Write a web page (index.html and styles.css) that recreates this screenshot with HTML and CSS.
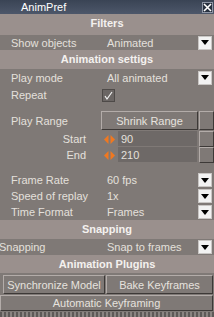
FILE: index.html
```html
<!DOCTYPE html>
<html>
<head>
<meta charset="utf-8">
<link rel="stylesheet" href="styles.css">
</head>
<body>
<div class="win">
  <div class="titlebar">
    <span class="title">AnimPref</span>
    <span class="close"><svg width="9" height="9" viewBox="0 0 9 9"><path d="M1 1 L8 8 M8 1 L1 8" stroke="#fff" stroke-width="1.6"/></svg></span>
  </div>

  <div class="hdr h-first">Filters</div>
  <div class="row r15">
    <span class="lbl">Show objects</span>
    <div class="dd"><span class="dd-text">Animated</span><span class="dd-btn"><svg width="8" height="5" viewBox="0 0 8 5"><path d="M0 0 H8 L4 5 Z" fill="#000"/></svg></span></div>
  </div>

  <div class="hdr">Animation settigs</div>
  <div class="row r17">
    <span class="lbl">Play mode</span>
    <div class="dd"><span class="dd-text">All animated</span><span class="dd-btn"><svg width="8" height="5" viewBox="0 0 8 5"><path d="M0 0 H8 L4 5 Z" fill="#000"/></svg></span></div>
  </div>
  <div class="row r17">
    <span class="lbl">Repeat</span>
    <span class="check"><svg width="11" height="11" viewBox="0 0 11 11"><path d="M2 6 L4 9 L9 2" stroke="#f2f2f2" stroke-width="1.2" fill="none"/></svg></span>
  </div>

  <div class="row r19 range">
    <span class="lbl">Play Range</span>
    <span class="btn shrink">Shrink Range</span>
    <span class="sq"></span>
  </div>
  <div class="row r16 num first-num">
    <span class="lbl lbl-r">Start</span>
    <span class="arrows"><svg width="11" height="9" viewBox="0 0 11 9"><path d="M4.5 0 V9 L0 4.5 Z M6.5 0 V9 L11 4.5 Z" fill="#f07820"/></svg></span>
    <span class="field">90</span>
    <span class="sq"></span>
  </div>
  <div class="row r16 num">
    <span class="lbl lbl-r">End</span>
    <span class="arrows"><svg width="11" height="9" viewBox="0 0 11 9"><path d="M4.5 0 V9 L0 4.5 Z M6.5 0 V9 L11 4.5 Z" fill="#f07820"/></svg></span>
    <span class="field">210</span>
    <span class="sq"></span>
  </div>

  <div class="row r16 after-gap">
    <span class="lbl">Frame Rate</span>
    <div class="dd"><span class="dd-text">60 fps</span><span class="dd-btn"><svg width="8" height="5" viewBox="0 0 8 5"><path d="M0 0 H8 L4 5 Z" fill="#000"/></svg></span></div>
  </div>
  <div class="row r16">
    <span class="lbl">Speed of replay</span>
    <div class="dd"><span class="dd-text">1x</span><span class="dd-btn"><svg width="8" height="5" viewBox="0 0 8 5"><path d="M0 0 H8 L4 5 Z" fill="#000"/></svg></span></div>
  </div>
  <div class="row r16">
    <span class="lbl">Time Format</span>
    <div class="dd"><span class="dd-text">Frames</span><span class="dd-btn"><svg width="8" height="5" viewBox="0 0 8 5"><path d="M0 0 H8 L4 5 Z" fill="#000"/></svg></span></div>
  </div>

  <div class="hdr">Snapping</div>
  <div class="row r16">
    <span class="lbl lbl-clip">Snapping</span>
    <div class="dd"><span class="dd-text">Snap to frames</span><span class="dd-btn"><svg width="8" height="5" viewBox="0 0 8 5"><path d="M0 0 H8 L4 5 Z" fill="#000"/></svg></span></div>
  </div>

  <div class="hdr h-last">Animation Plugins</div>
  <div class="btnrow">
    <span class="btn b-sync">Synchronize Model</span>
    <span class="btn b-bake">Bake Keyframes</span>
  </div>
  <span class="btn b-auto">Automatic Keyframing</span>
  <div class="pattern"></div>
</div>
</body>
</html>
```

FILE: styles.css
```css
html, body {
  margin: 0;
  padding: 0;
}
body {
  background: #7f7976;
  font-family: "Liberation Sans", Arial, sans-serif;
  font-size: 11px;
  color: #e4e0dc;
}
.win {
  width: 214px;
  height: 317px;
  overflow: hidden;
  display: flex;
  flex-direction: column;
  background: #7f7976;
}
.titlebar {
  height: 14px;
  flex: none;
  display: flex;
  align-items: center;
  justify-content: space-between;
  background: linear-gradient(#3a4455, #4d576a);
  color: #ffffff;
  padding: 0 1px 0 21px;
}
.title {
  font-size: 11px;
  line-height: 14px;
}
.close {
  width: 9px;
  height: 9px;
  display: flex;
  align-items: center;
  justify-content: center;
  background: #27303f;
  border: 1px solid #8e96a6;
}
.hdr {
  flex: none;
  height: 19px;
  line-height: 19px;
  text-align: center;
  font-weight: bold;
  color: #f4f1ef;
  background: #9a908d;
}
.h-first {
  height: 21px;
  line-height: 19px;
}
.h-last {
  height: 18px;
  line-height: 18px;
}
.row {
  flex: none;
  display: flex;
  align-items: center;
}
.r15 { height: 15px; }
.r16 { height: 16px; }
.r17 { height: 17px; }
.r19 { height: 19px; }
.lbl {
  width: 93px;
  padding-left: 11px;
  flex: none;
  white-space: nowrap;
}
.lbl-r {
  width: 86px;
  padding-left: 0;
  padding-right: 18px;
  text-align: right;
}
.lbl-clip {
  padding-left: 0;
  margin-left: -1px;
  width: 105px;
}
.dd {
  flex: 1;
  display: flex;
  align-items: center;
  padding-right: 2px;
}
.dd-text {
  flex: 1;
  padding-left: 3px;
  white-space: nowrap;
}
.dd-btn {
  width: 12px;
  height: 12px;
  display: flex;
  align-items: center;
  justify-content: center;
  background: #f2f2f2;
  border: 1px solid #c9c6c4;
}
.check {
  width: 11px;
  height: 11px;
  margin-left: -2px;
  margin-top: 1px;
  background: #6b6664;
  border: 1px solid #4e4a48;
  display: flex;
  align-items: center;
  justify-content: center;
}
.range {
  margin-top: 8px;
  align-items: stretch;
}
.range .lbl {
  width: 86px;
  display: flex;
  align-items: center;
}
.btn {
  display: flex;
  align-items: center;
  justify-content: center;
  background: #7f7976;
  color: #e6e2de;
  border-top: 1px solid #b3aca9;
  border-left: 1px solid #b3aca9;
  border-right: 1px solid #3d3937;
  border-bottom: 1px solid #3d3937;
  white-space: nowrap;
  box-sizing: border-box;
}
.shrink {
  width: 97px;
  margin-left: 4px;
}
.sq {
  width: 15px;
  height: 100%;
  box-sizing: border-box;
  margin-left: 1px;
  border-top: 1px solid #b3aca9;
  border-left: 1px solid #b3aca9;
  border-right: 1px solid #3d3937;
  border-bottom: 1px solid #3d3937;
}
.num {
  align-items: stretch;
}
.first-num {
  margin-top: 1px;
}
.num .lbl {
  display: flex;
  align-items: center;
  justify-content: flex-end;
}
.arrows {
  width: 14px;
  display: flex;
  align-items: center;
  flex: none;
}
.field {
  width: 76px;
  padding-left: 3px;
  margin-right: 1px;
  background: #6e6967;
  display: flex;
  align-items: center;
  border-bottom: 1px solid #7f7976;
}
.after-gap {
  margin-top: 9px;
}
.btnrow {
  flex: none;
  display: flex;
  margin-top: 2px;
  padding-left: 3px;
  gap: 1px;
}
.b-sync {
  width: 102px;
  height: 19px;
}
.b-bake {
  width: 107px;
  height: 19px;
}
.b-auto {
  flex: none;
  width: 213px;
  height: 16px;
  margin-top: 1px;
}
.pattern {
  flex: none;
  height: 6px;
  margin-top: 1px;
  background: repeating-linear-gradient(90deg, #5e5957 0 2px, #8a8481 2px 4px);
}
```
